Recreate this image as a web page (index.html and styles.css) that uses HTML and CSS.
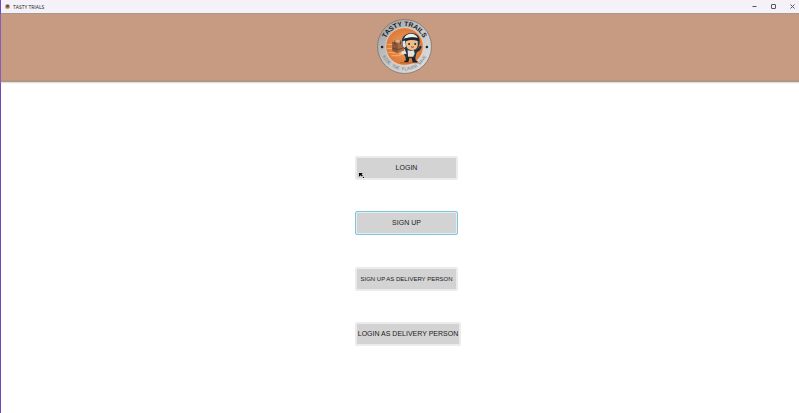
FILE: index.html
```html
<!DOCTYPE html>
<html lang="en">
<head>
<meta charset="utf-8">
<meta name="viewport" content="width=device-width, initial-scale=1">
<title>TASTY TRIALS</title>
<link rel="stylesheet" href="styles.css">
</head>
<body>
<div class="window">
  <div class="titlebar">
    <svg class="app-icon" viewBox="0 0 6 6" aria-hidden="true">
      <circle cx="3" cy="3" r="3" fill="#b9a99f"/>
      <circle cx="3" cy="3" r="2" fill="#a56a43"/>
      <path d="M2 1.5h2.4v1.6H2z" fill="#3c3431"/>
    </svg>
    <span class="title">TASTY TRIALS</span>
    <div class="controls">
      <button class="control" type="button" aria-label="Minimize"><svg viewBox="0 0 7 7"><path d="M1.5 3.5h4"/></svg></button>
      <button class="control" type="button" aria-label="Maximize"><svg viewBox="0 0 7 7"><rect x="1.5" y="1.5" width="4" height="4" rx=".4"/></svg></button>
      <button class="control" type="button" aria-label="Close"><svg viewBox="0 0 7 7"><path d="M1.5 1.5l4 4M5.5 1.5l-4 4"/></svg></button>
    </div>
  </div>
  <header class="banner">
    <svg class="logo" viewBox="0 0 108 108" role="img" aria-label="Tasty Trails">
      <defs>
        <linearGradient id="rim" x1="0" y1="0" x2="1" y2="1">
          <stop offset="0" stop-color="#999b9c"/>
          <stop offset=".45" stop-color="#c3c4c5"/>
          <stop offset="1" stop-color="#e2e2e2"/>
        </linearGradient>
        <radialGradient id="sun">
          <stop offset="0" stop-color="#f0a061"/>
          <stop offset="1" stop-color="#df7836"/>
        </radialGradient>
        <path id="arc-top" d="M14 54a40 40 0 0 1 80 0"/>
        <path id="arc-bottom" d="M7 54a47 47 0 0 0 94 0"/>
      </defs>
      <circle cx="54" cy="54" r="53" fill="url(#rim)" stroke="#77706c" stroke-width="1.5"/>
      <circle cx="54" cy="54" r="37" fill="url(#sun)" stroke="#e5ddd5" stroke-width="1.5"/>
      <text class="logo-name"><textPath href="#arc-top" startOffset="50%">TASTY TRAILS</textPath></text>
      <text class="logo-tag"><textPath href="#arc-bottom" startOffset="50%">RIDE THE FLAVOR WAVE</textPath></text>
      <circle cx="10" cy="55" r="2.5" fill="#22262a"/>
      <circle cx="98" cy="55" r="2.5" fill="#22262a"/>
      <path d="M20 50h10M19 58h11M21 66h14M28 72h18" stroke="#f7b780" stroke-width="1.5"/>
      <path d="M30 44l11-4 12 3v20l-12 4-11-4z" fill="#a96c44"/>
      <path d="M30 44l11 3 12-4-12-3z" fill="#d9ac82"/>
      <path d="M41 47v20l-11-4V44z" fill="#8c5638"/>
      <path d="M35 42v8M46 42v8M30 57l11 3 10-3" stroke="#5c3a29" stroke-width="1.5" fill="none"/>
      <path d="M56 58h19l3 8-3 11H57l-4-8z" fill="#26313a"/>
      <path d="M60 59h12l2 9-3 6H61z" fill="#e8e2d8"/>
      <path d="M55 61l-8 4 1 5 10-2z" fill="#e8e2d8"/>
      <path d="M48 65l-5 2 2 4 4-1z" fill="#e6b486"/>
      <path d="M74 60l7-3 4-5 3 3-4 7-8 5z" fill="#26313a"/>
      <path d="M56 76h7v5l-2 4h-8l1-3 3-1zM68 76h7l1 5 4 2-1 3h-9z" fill="#1b2329"/>
      <path d="M49 48q-2-12 7-17 9-6 19-2 10 4 9 17-1 9-6 14-13 5-24-1-4-4-5-11z" fill="#26384a"/>
      <path d="M53 39q3-9 13-10 11 0 14 9-13-4-27 1z" fill="#eef0ee"/>
      <path d="M57 43q11-4 23 0v9q-1 6-5 8-8 2-14-1-5-5-4-16z" fill="#f0bd88"/>
      <path d="M54 44q13-7 29-1l-1-5q-14-5-28 1z" fill="#17232c"/>
      <path d="M50 44l5-2 2 12-4 3q-4-5-3-13z" fill="#e3e6e4"/>
      <circle cx="63" cy="49" r="2" fill="#332622"/>
      <circle cx="75" cy="49" r="2" fill="#332622"/>
      <path d="M67 54q3 3 5 0" stroke="#863e30" stroke-width="2" fill="none"/>
      <path d="M45 86h37" stroke="#a5562c" stroke-width="1.5"/>
    </svg>
  </header>
  <main class="content">
    <div class="menu">
      <div class="menu-group">
        <button class="action" type="button">LOGIN
          <svg class="pointer" viewBox="0 0 6 6" aria-hidden="true"><path d="M0 0h4.5L3 1.5l1.6 1.7-1 1L2 2.7 0 4.6zM4.8 4.8H6V6H4.8z"/></svg>
        </button>
        <button class="action focused" type="button">SIGN UP</button>
      </div>
      <div class="menu-group">
        <button class="action compact" type="button">SIGN UP AS DELIVERY PERSON</button>
        <button class="action wide" type="button">LOGIN AS DELIVERY PERSON</button>
      </div>
    </div>
  </main>
</div>
</body>
</html>
```
FILE: styles.css
```css
* {
  box-sizing: border-box;
}

body {
  margin: 0;
  background: #fff;
  color: #222;
  font-family: "Liberation Sans", Arial, sans-serif;
}

.window {
  min-height: 100vh;
  border-left: 1px solid #7448b4;
}

.titlebar {
  display: flex;
  align-items: center;
  height: 13px;
  padding-left: 4px;
  background: #f4f1f9;
}

.app-icon {
  width: 5px;
  height: 5px;
}

.title {
  margin-left: 3px;
  font-family: "Open Sans", sans-serif;
  font-size: 5px;
  line-height: 12px;
}

.controls {
  display: flex;
  margin-left: auto;
}

.control {
  display: flex;
  align-items: center;
  justify-content: center;
  width: 19px;
  height: 12px;
  padding: 0 0 0 5px;
  border: 0;
  background: transparent;
}

.control svg {
  width: 7px;
  height: 7px;
  fill: none;
  stroke: #555;
  stroke-width: 1;
}

.banner {
  display: flex;
  justify-content: center;
  padding: 5px 0 7px 8px;
  border-top: 1px solid #a9988f;
  border-bottom: 2px solid #b3977f;
  background: #c79a82;
  box-shadow: 0 1px 1px #ddd;
}

.logo {
  width: 55px;
  height: 55px;
  margin-bottom: -1px;
}

.logo-name {
  fill: #17191b;
  font-size: 13px;
  font-weight: 700;
  text-anchor: middle;
}

.logo-tag {
  fill: #74777a;
  font-family: "Liberation Mono", monospace;
  font-size: 9px;
  text-anchor: middle;
}

.content {
  display: flex;
  justify-content: center;
  padding: 74px 0 32px 16px;
}

.menu {
  display: flex;
  flex-direction: column;
  gap: 32px;
}

.menu-group {
  display: flex;
  flex-direction: column;
  align-items: flex-start;
  gap: 31px;
}

.action {
  position: relative;
  width: 103px;
  height: 24px;
  padding: 0;
  border: 2px solid #ebebeb;
  border-radius: 2px;
  background: #d3d3d3;
  color: #222;
  font-family: inherit;
  font-size: 7px;
  line-height: 8px;
  white-space: nowrap;
}

.focused {
  border: 1px solid #84c3e0;
  box-shadow: inset 0 0 0 1px #e0eef5;
}

.compact {
  font-size: 6px;
}

.wide {
  width: 106px;
}

.pointer {
  position: absolute;
  bottom: 0;
  left: 2px;
  width: 5px;
  height: 5px;
  fill: #000;
}
```
